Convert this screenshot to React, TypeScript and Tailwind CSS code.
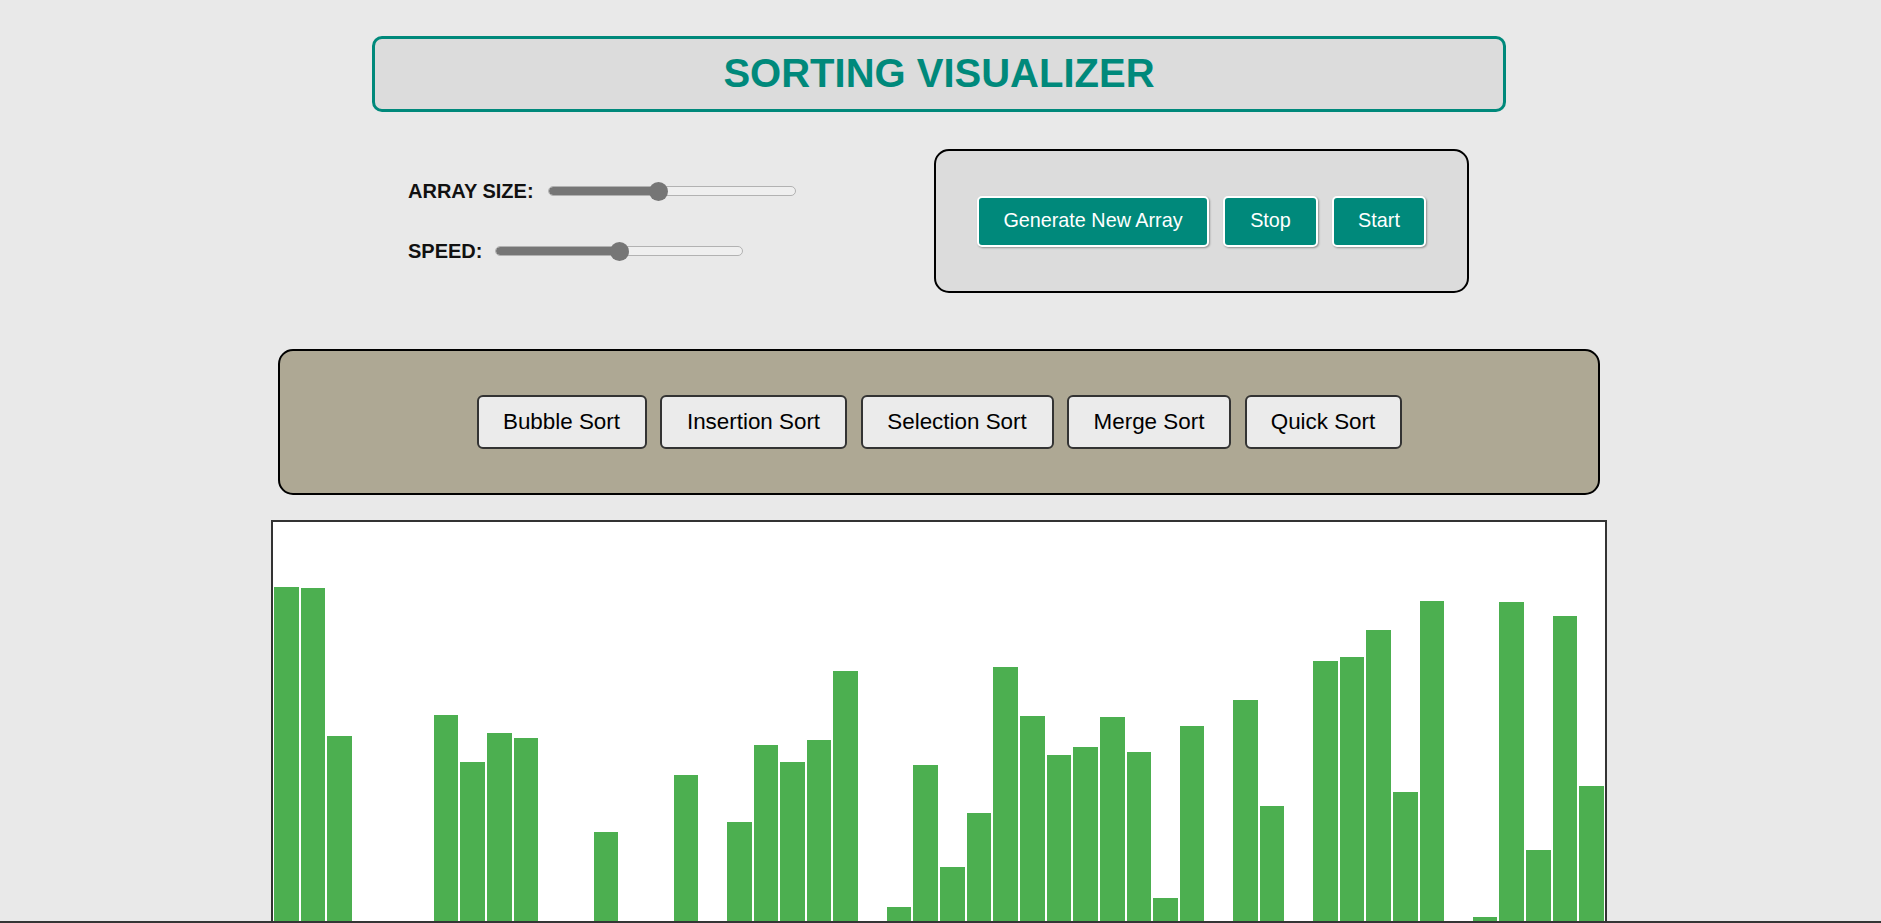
import React from "react";

const tops: (number | null)[] = [
  587, 588, 736, null, null, null, 715, 762, 733, 738,
  null, null, 832, null, null, 775, null, 822, 745, 762,
  740, 671, null, 907, 765, 867, 813, 667, 716, 755,
  747, 717, 752, 898, 726, null, 700, 806, null, 661,
  657, 630, 792, 601, null, 917, 602, 850, 616, 786,
];

function Slider({ pct }: { pct: number }) {
  const thumbLeft = 229 * pct;
  return (
    <div className="relative w-[248px] h-[20px] flex items-center">
      <div className="relative w-full h-[10px] rounded-full border border-[#b2b2b2] bg-[#efefef] overflow-hidden">
        <div
          className="absolute left-0 top-0 bottom-0 bg-[#767676] rounded-full"
          style={{ width: thumbLeft + 10 }}
        />
      </div>
      <div
        className="absolute top-[0.5px] w-[19px] h-[19px] rounded-full bg-[#767676]"
        style={{ left: thumbLeft }}
      />
    </div>
  );
}

export default function App() {
  const sorts: [string, string][] = [
    ["Bubble Sort", "w-[170px]"],
    ["Insertion Sort", "w-[187px]"],
    ["Selection Sort", "w-[193px]"],
    ["Merge Sort", "w-[164px]"],
    ["Quick Sort", "w-[157px]"],
  ];
  return (
    <div className="h-[923px] overflow-hidden bg-[#e9e9e9] border-b-2 border-[#353535] pr-[3px] flex flex-col font-['Liberation_Sans',Arial,sans-serif] text-black">
      <div className="mt-[36px] mx-auto w-[1134px] h-[76px] shrink-0 border-[3px] border-[#00897b] rounded-[10px] bg-[#dcdcdc] flex items-center justify-center">
        <h1 className="text-[40px] leading-none font-bold text-[#00897b] -mt-[3px]">
          SORTING VISUALIZER
        </h1>
      </div>

      <div className="mt-[37px] mx-auto w-[1134px] shrink-0 flex items-center">
        <div className="ml-[36px] flex flex-col gap-[30px]">
          <div className="h-[30px] flex items-center">
            <span className="text-[20px] font-bold text-[#111]">ARRAY SIZE:</span>
            <div className="ml-[14px]">
              <Slider pct={0.444} />
            </div>
          </div>
          <div className="h-[30px] flex items-center">
            <span className="text-[20px] font-bold text-[#111]">SPEED:</span>
            <div className="ml-[13px]">
              <Slider pct={0.5} />
            </div>
          </div>
        </div>
        <div className="ml-auto mr-[37px] w-[535px] h-[144px] border-2 border-black rounded-[15px] bg-[#dcdcdc] flex items-center justify-center gap-[14px]">
          <button className="w-[232px] h-[51px] rounded-[5px] border-2 border-white bg-[#00897b] text-white text-[19.8px] shadow-[1px_1px_2px_rgba(0,0,0,0.35)] flex items-center justify-center">
            Generate New Array
          </button>
          <button className="w-[95px] h-[51px] rounded-[5px] border-2 border-white bg-[#00897b] text-white text-[19.8px] shadow-[1px_1px_2px_rgba(0,0,0,0.35)] flex items-center justify-center">
            Stop
          </button>
          <button className="w-[94px] h-[51px] rounded-[5px] border-2 border-white bg-[#00897b] text-white text-[19.8px] shadow-[1px_1px_2px_rgba(0,0,0,0.35)] flex items-center justify-center">
            Start
          </button>
        </div>
      </div>

      <div className="mt-[56px] mx-auto w-[1322px] h-[146px] shrink-0 border-2 border-black rounded-[15px] bg-[#aea894] flex items-center justify-center gap-[13.5px]">
        {sorts.map(([label, w]) => (
          <button
            key={label}
            className={`${w} h-[54px] rounded-[6px] border-2 border-[#333] bg-[#ebebeb] text-[22.4px] text-black flex items-center justify-center`}
          >
            {label}
          </button>
        ))}
      </div>

      <div className="mt-[25px] mx-auto w-[1336px] flex-1 border-2 border-b-0 border-[#333] bg-white flex items-end">
        {tops.map((t, i) => (
          <div
            key={i}
            className="flex-1 mx-px bg-[#4caf50]"
            style={{ height: t === null ? 0 : 921 - t }}
          />
        ))}
      </div>
    </div>
  );
}
